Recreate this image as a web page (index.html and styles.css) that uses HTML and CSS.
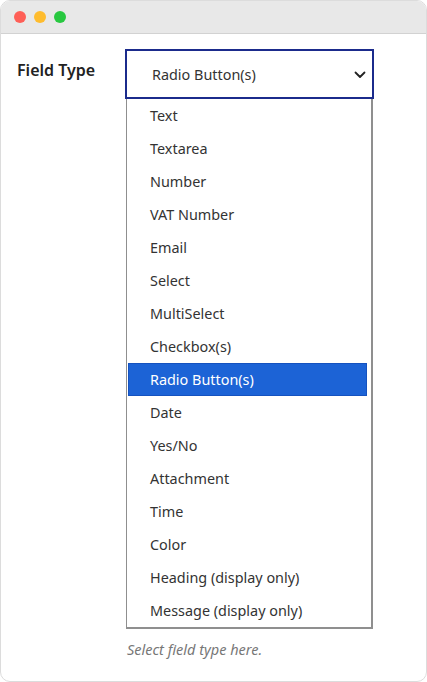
FILE: index.html
```html
<!DOCTYPE html>
<html>
<head>
<meta charset="utf-8">
<link rel="stylesheet" href="styles.css">
</head>
<body>
<div class="window">
  <div class="titlebar">
    <span class="dot red"></span>
    <span class="dot yellow"></span>
    <span class="dot green"></span>
  </div>
  <div class="content">
    <div class="label">Field Type</div>
    <div class="field">
      <div class="select">
        <span class="value">Radio Button(s)</span>
        <svg class="chev" width="12" height="8" viewBox="0 0 12 8"><path d="M1.5 1.5 L6 6 L10.5 1.5" fill="none" stroke="#222" stroke-width="1.8" stroke-linecap="round" stroke-linejoin="round"/></svg>
      </div>
      <ul class="list">
        <li>Text</li>
        <li>Textarea</li>
        <li>Number</li>
        <li>VAT Number</li>
        <li>Email</li>
        <li>Select</li>
        <li>MultiSelect</li>
        <li>Checkbox(s)</li>
        <li class="selected">Radio Button(s)</li>
        <li>Date</li>
        <li>Yes/No</li>
        <li>Attachment</li>
        <li>Time</li>
        <li>Color</li>
        <li>Heading (display only)</li>
        <li>Message (display only)</li>
      </ul>
      <div class="help">Select field type here.</div>
    </div>
  </div>
</div>
</body>
</html>
```
FILE: styles.css
```css
html, body {
  margin: 0;
  padding: 0;
  background: #ffffff;
}
body {
  font-family: "Noto Sans", "Open Sans", sans-serif;
  color: #333;
}
.window {
  box-sizing: border-box;
  width: 427px;
  height: 682px;
  border: 1px solid #dcdcdc;
  border-radius: 10px;
  overflow: hidden;
  background: #fff;
}
.titlebar {
  box-sizing: border-box;
  height: 33px;
  background: #e8e8e8;
  border-bottom: 1px solid #d2d2d2;
  display: flex;
  align-items: center;
  gap: 8px;
  padding-left: 13px;
  padding-bottom: 1px;
}
.dot {
  width: 12px;
  height: 12px;
  border-radius: 50%;
}
.red { background: #fe5f57; }
.yellow { background: #febc2e; }
.green { background: #28c840; }
.content {
  display: grid;
  grid-template-columns: 108px 249px;
  padding: 15px 0 0 16px;
}
.label {
  font-weight: 600;
  font-size: 16px;
  line-height: 20px;
  margin-top: 11px;
  color: #222;
}
.field {
  display: flex;
  flex-direction: column;
}
.select {
  box-sizing: border-box;
  height: 50px;
  border: 2px solid #1b2b8c;
  display: flex;
  align-items: center;
  justify-content: space-between;
  padding: 0 6px 0 25px;
  font-size: 14.4px;
  color: #333;
}
.chev {
  margin-top: 1px;
}
.list {
  list-style: none;
  margin: 0 1px;
  padding: 0 0 0 1px;
  border: 1px solid #8f8f8f;
  border-right-width: 2px;
  border-bottom-width: 2px;
  border-top: none;
}
.list li {
  height: 33px;
  line-height: 33px;
  padding-left: 22px;
  font-size: 14.4px;
  color: #333;
  margin-right: 4px;
}
.list li.selected {
  background: #1c63d6;
  color: #fff;
  box-shadow: inset 0 0 0 1px #1552bf;
}
.help {
  margin-top: 11px;
  padding-left: 2px;
  font-size: 14.5px;
  font-style: italic;
  color: #777;
  line-height: 18px;
}
```
